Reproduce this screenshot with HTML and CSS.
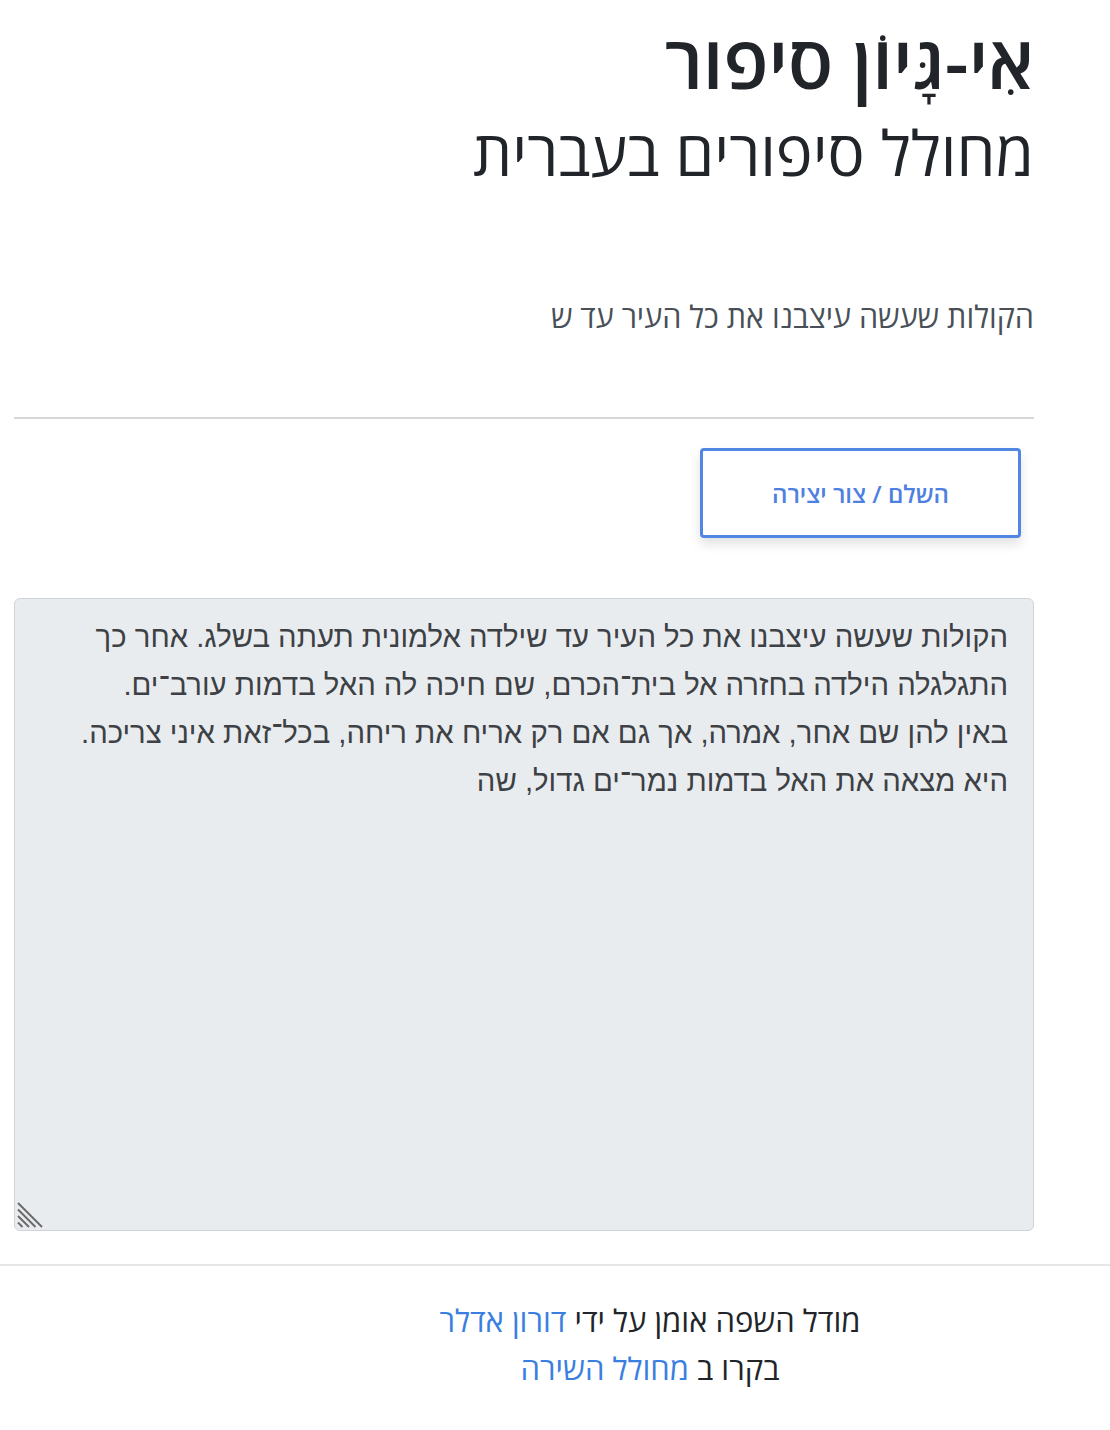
FILE: index.html
```html
<!DOCTYPE html>
<html lang="he" dir="rtl">
<head>
<meta charset="utf-8">
<title>אִי-גָּיוֹן סיפור</title>
<link rel="stylesheet" href="styles.css">
</head>
<body>
<main class="page">
  <header class="header">
    <h1 class="title">אִי-גָּיוֹן סיפור</h1>
    <h2 class="subtitle">מחולל סיפורים בעברית</h2>
  </header>
  <p class="prompt">הקולות שעשה עיצבנו את כל העיר עד ש</p>
  <hr class="rule">
  <div class="actions">
    <button class="btn">השלם / צור יצירה</button>
  </div>
  <div class="story-wrap">
    <textarea class="story" readonly>הקולות שעשה עיצבנו את כל העיר עד שילדה אלמונית תעתה בשלג. אחר כך התגלגלה הילדה בחזרה אל בית־הכרם, שם חיכה לה האל בדמות עורב־ים. באין להן שם אחר, אמרה, אך גם אם רק אריח את ריחה, בכל־זאת איני צריכה. היא מצאה את האל בדמות נמר־ים גדול, שה</textarea>
    <svg class="grip" width="26" height="26" viewBox="0 0 26 26" aria-hidden="true">
      <g stroke="#6a6a6a" stroke-width="2">
        <line x1="1" y1="1" x2="25" y2="25"/>
        <line x1="1" y1="7.5" x2="18.5" y2="25"/>
        <line x1="1" y1="14" x2="12" y2="25"/>
        <line x1="1" y1="20.5" x2="5.5" y2="25"/>
      </g>
    </svg>
  </div>
</main>
<footer class="footer">
  <p class="footer-line">מודל השפה אומן על ידי <a href="#" class="link">דורון אדלר</a></p>
  <p class="footer-line">בקרו ב <a href="#" class="link">מחולל השירה</a></p>
</footer>
</body>
</html>
```
FILE: styles.css
```css
html, body {
  margin: 0;
  padding: 0;
  background: #ffffff;
}
body {
  font-family: "Open Sans", "Noto Sans", "DejaVu Sans", sans-serif;
  color: #212529;
  direction: rtl;
}
.page {
  margin: 0 76px 0 14px;
  padding-top: 18px;
}
.title {
  margin: 0;
  font-size: 74px;
  font-weight: 600;
  line-height: 86px;
  color: #212529;
}
.subtitle {
  margin: 0;
  font-size: 62px;
  font-weight: 500;
  line-height: 96px;
  color: #212529;
}
.prompt {
  margin: 96px 0 0 0;
  font-size: 30.5px;
  line-height: 40px;
  color: #495057;
}
.rule {
  margin: 81px 0 0 0;
  border: 0;
  border-top: 2px solid #d6d6d6;
  height: 0;
}
.actions {
  display: flex;
  justify-content: flex-start;
  padding-right: 13px;
  margin-top: 29px;
}
.btn {
  width: 321px;
  height: 90px;
  background: #ffffff;
  border: 3px solid #5286e3;
  border-radius: 4px;
  box-shadow: 0 6px 12px rgba(0, 0, 0, 0.12);
  color: #4e80e2;
  font-family: "Open Sans", "Noto Sans", "DejaVu Sans", sans-serif;
  font-size: 24px;
  font-weight: 600;
  cursor: pointer;
}
.story-wrap {
  position: relative;
  margin-top: 60px;
}
.story {
  display: block;
  box-sizing: border-box;
  width: 100%;
  height: 633px;
  margin: 0;
  padding: 14px 25px 14px 55px;
  background: #e9ecef;
  border: 1px solid #cfd3d8;
  border-radius: 6px;
  color: #3d4145;
  font-family: "Liberation Sans", Arial, sans-serif;
  font-size: 29.3px;
  line-height: 48px;
  resize: none;
  direction: rtl;
}
.grip {
  position: absolute;
  left: 3px;
  bottom: 3px;
}
.footer {
  margin-top: 33px;
  border-top: 2px solid #e6e6e6;
  padding: 30px 0 20px 190px;
  text-align: center;
}
.footer-line {
  margin: 0;
  font-size: 31px;
  line-height: 48px;
  color: #212529;
}
.link {
  color: #3a7fe0;
  text-decoration: none;
}
```
